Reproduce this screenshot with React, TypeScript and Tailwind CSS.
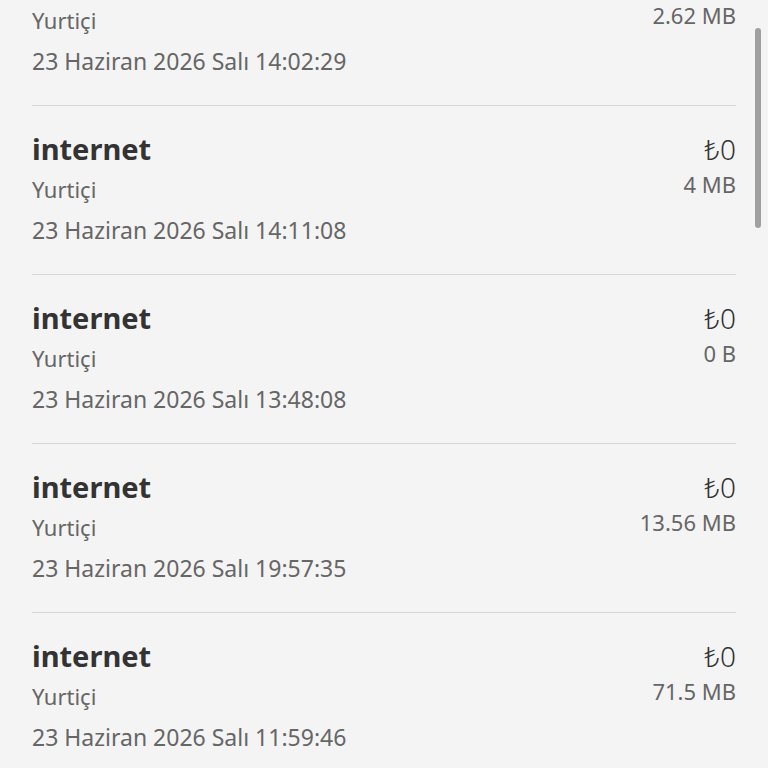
const items = [
  { title: "internet", price: "₺0", size: "2.62 MB", date: "23 Haziran 2026 Salı 14:02:29" },
  { title: "internet", price: "₺0", size: "4 MB", date: "23 Haziran 2026 Salı 14:11:08" },
  { title: "internet", price: "₺0", size: "0 B", date: "23 Haziran 2026 Salı 13:48:08" },
  { title: "internet", price: "₺0", size: "13.56 MB", date: "23 Haziran 2026 Salı 19:57:35" },
  { title: "internet", price: "₺0", size: "71.5 MB", date: "23 Haziran 2026 Salı 11:59:46" },
];

const App = () => {
  return (
    <div className="relative h-[768px] w-[768px] overflow-hidden bg-[#f4f4f4] font-['Noto_Sans',sans-serif]">
      {/* Liste */}
      <div className="mt-[-64px] px-[32px]">
        {items.map((item, i) => (
          <div
            key={i}
            className={`flex justify-between pt-[23px] pb-[23px] ${i > 0 ? "border-t border-[#d6d6d6]" : "border-t border-transparent"}`}
          >
            <div className="flex flex-col">
              <div className="text-[29px] leading-[40px] font-bold text-[#333333]">{item.title}</div>
              <div className="text-[22px] leading-[40px] text-[#666666]">Yurtiçi</div>
              <div className="text-[23px] leading-[42px] text-[#666666]">{item.date}</div>
            </div>
            <div className="flex flex-col items-end">
              <div className="text-[28px] leading-[40px] font-light text-[#333333]">{item.price}</div>
              <div className="text-[22px] leading-[30px] text-[#666666]">{item.size}</div>
            </div>
          </div>
        ))}
      </div>

      {/* Kaydırma çubuğu */}
      <div className="absolute left-[755px] top-[28px] h-[200px] w-[6px] rounded-full bg-[#a0a0a0]" />
    </div>
  );
};

export default App;
